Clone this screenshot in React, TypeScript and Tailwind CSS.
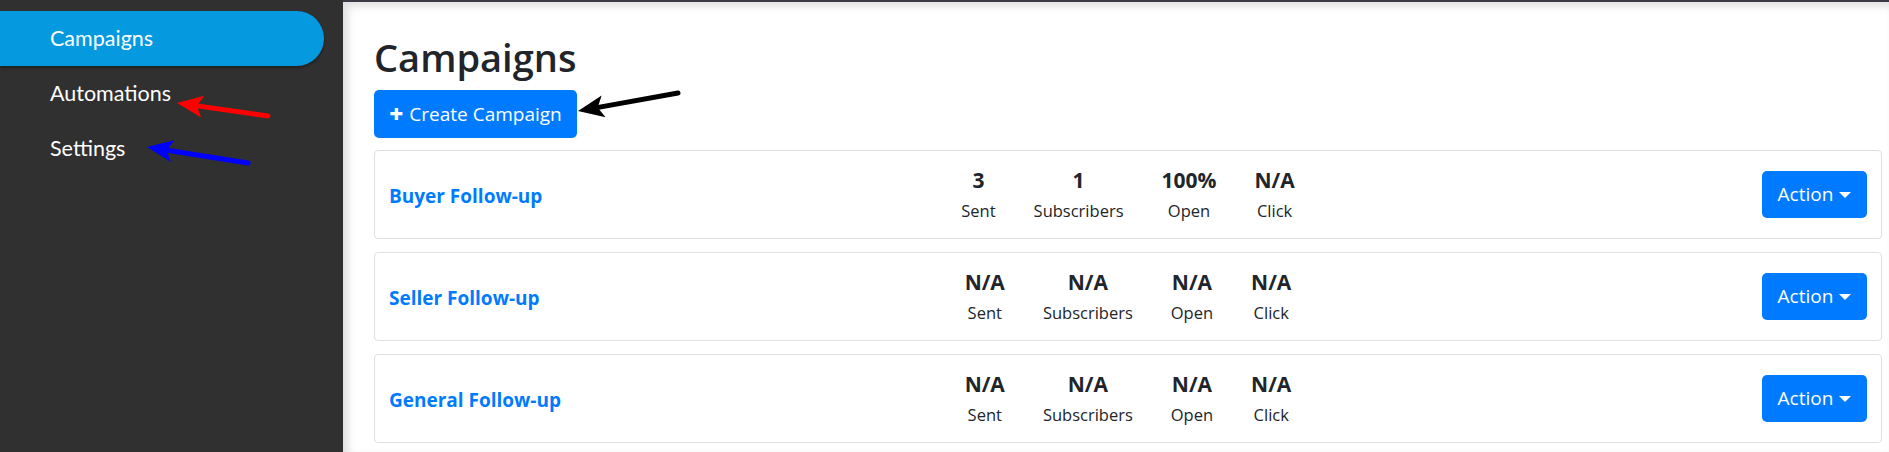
import React from "react";

const campaigns = [
  { name: "Buyer Follow-up", stats: ["3", "1", "100%", "N/A"] },
  { name: "Seller Follow-up", stats: ["N/A", "N/A", "N/A", "N/A"] },
  { name: "General Follow-up", stats: ["N/A", "N/A", "N/A", "N/A"] },
];
const labels = ["Sent", "Subscribers", "Open", "Click"];

function Arrow({ x1, y1, x2, y2, color }: { x1: number; y1: number; x2: number; y2: number; color: string }) {
  const dx = x2 - x1;
  const dy = y2 - y1;
  const len = Math.sqrt(dx * dx + dy * dy);
  const ux = dx / len;
  const uy = dy / len;
  const hl = 26;
  const hw = 11;
  const bx = x2 - ux * hl;
  const by = y2 - uy * hl;
  const px = -uy;
  const py = ux;
  return (
    <g>
      <line x1={x1} y1={y1} x2={bx + ux * 4} y2={by + uy * 4} stroke={color} strokeWidth={5} strokeLinecap="round" />
      <polygon
        points={`${x2},${y2} ${bx + px * hw},${by + py * hw} ${bx + ux * 6},${by + uy * 6} ${bx - px * hw},${by - py * hw}`}
        fill={color}
      />
    </g>
  );
}

export default function App() {
  return (
    <div className="relative flex h-[452px] w-[1889px] overflow-hidden bg-white">
      <aside className="w-[343px] shrink-0 bg-[#303030] pt-[11px] font-['Lato','Noto_Sans',sans-serif]">
        <div className="flex h-[55px] w-[324px] items-center rounded-r-full bg-[#0599e0] pl-[50px] text-[21.5px] text-white shadow-[0_2px_3px_rgba(0,0,0,0.35)]">
          Campaigns
        </div>
        <div className="flex h-[55px] items-center pl-[50px] text-[21.5px] text-white">Automations</div>
        <div className="flex h-[55px] items-center pl-[50px] text-[21.5px] text-white">Settings</div>
      </aside>
      <main className="relative flex-1 border-t-2 border-[#3b3b45] pl-[31px] pr-[7px] pt-[31px] font-['Open_Sans','Noto_Sans',sans-serif] text-[#212529] shadow-[inset_5px_4px_8px_rgba(0,0,0,0.13)]">
        <h1 className="text-[38px] font-semibold leading-[48px]">Campaigns</h1>
        <button className="mt-[9px] flex h-[48px] w-[203px] items-center justify-center rounded-[5px] bg-[#007bff] text-[19px] text-white">
          <span className="mr-[6px] text-[24px] font-extrabold leading-none">+</span>
          Create Campaign
        </button>
        <div className="mt-[12px] flex flex-col gap-[13px]">
          {campaigns.map((c) => (
            <div
              key={c.name}
              className="grid h-[89px] grid-cols-3 items-center rounded-[4px] border border-[#dfdfdf] px-[14px]"
            >
              <div className="pt-[3px] text-[19px] font-bold text-[#007bff]">{c.name}</div>
              <div className="flex justify-center gap-[38px] pt-[2px]">
                {c.stats.map((s, i) => (
                  <div key={i} className="flex flex-col items-center">
                    <div className="text-[21px] font-bold leading-[28px]">{s}</div>
                    <div className="mt-[3px] text-[16.5px] leading-[28px]">{labels[i]}</div>
                  </div>
                ))}
              </div>
              <div className="flex justify-end">
                <button className="flex h-[47px] w-[105px] items-center justify-center rounded-[5px] bg-[#007bff] text-[19px] text-white">
                  Action
                  <span className="ml-[6px] inline-block h-0 w-0 border-x-[6px] border-t-[6px] border-x-transparent border-t-white" />
                </button>
              </div>
            </div>
          ))}
        </div>
      </main>
      <svg className="pointer-events-none absolute left-0 top-0" width={1889} height={452}>
        <Arrow x1={268} y1={116} x2={177} y2={103} color="#ff0000" />
        <Arrow x1={248} y1={163} x2={147} y2={147} color="#0000ff" />
        <Arrow x1={678} y1={93} x2={578} y2={111} color="#000000" />
      </svg>
    </div>
  );
}
